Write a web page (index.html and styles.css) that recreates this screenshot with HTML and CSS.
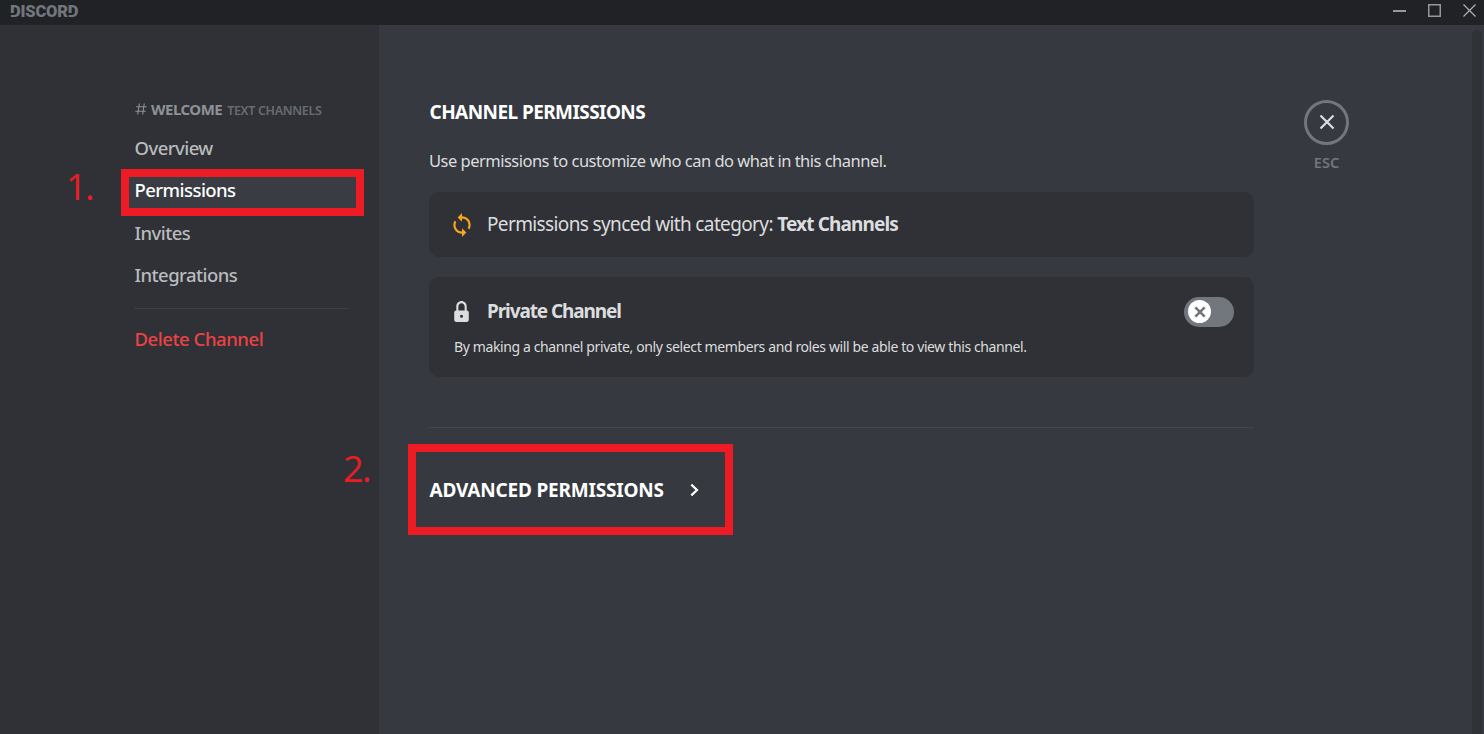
FILE: index.html
```html
<!DOCTYPE html>
<html lang="en">
<head>
<meta charset="utf-8">
<title>Channel Permissions</title>
<link rel="stylesheet" href="styles.css">
</head>
<body>
<div class="app">
  <header class="titlebar">
    <div class="wordmark"><span class="letter-d">D</span>ISCOR<span class="letter-d">D</span></div>
    <div class="window-controls">
      <svg width="13" height="13" viewBox="0 0 13 13"><path d="M0 7h13" stroke="#96989d" stroke-width="2"/></svg>
      <svg width="13" height="13" viewBox="0 0 13 13"><path d="M.75.75h11.500v11.500H.75z" fill="none" stroke="#96989d" stroke-width="1.500"/></svg>
      <svg width="13" height="13" viewBox="0 0 13 13"><path d="M.5.5l12 12M12.500.5l-12 12" fill="none" stroke="#b0b2b6" stroke-width="1.200"/></svg>
    </div>
  </header>
  <div class="body">
    <nav class="sidebar">
      <div class="nav-heading">
        <svg width="12" height="12" viewBox="0 0 12 12"><path d="M4.400.5L2.700 11.500M9.300.5L7.600 11.500M1.200 3.700h10.500M.3 8.300h10.500" fill="none" stroke="#8e9297" stroke-width="1.100"/></svg>
        <span class="nav-channel">WELCOME</span>
        <span class="nav-category">TEXT CHANNELS</span>
      </div>
      <a class="nav-item">Overview</a>
      <a class="nav-item active">Permissions</a>
      <a class="nav-item">Invites</a>
      <a class="nav-item">Integrations</a>
      <div class="nav-divider"></div>
      <a class="nav-item danger">Delete Channel</a>
    </nav>
    <main class="content">
      <h1 class="title">CHANNEL PERMISSIONS</h1>
      <p class="intro">Use permissions to customize who can do what in this channel.</p>
      <section class="card sync">
        <svg class="card-icon" width="26" height="26" viewBox="0 0 24 24"><path fill="#faa61a" d="M12 4V1L8 5l4 4V6c3.310 0 6 2.690 6 6 0 1.010-.25 1.970-.7 2.800l1.460 1.460A7.930 7.930 0 0 0 20 12c0-4.420-3.580-8-8-8zm0 14c-3.310 0-6-2.690-6-6 0-1.010.25-1.970.7-2.800L5.240 7.740A7.930 7.930 0 0 0 4 12c0 4.420 3.580 8 8 8v3l4-4-4-4v3z"/></svg>
        <p class="sync-text">Permissions synced with category: <b>Text Channels</b></p>
      </section>
      <section class="card private">
        <div class="private-row">
          <svg class="card-icon" width="25" height="25" viewBox="0 0 24 24"><path fill="#dcddde" d="M17 11V7c0-2.760-2.240-5-5-5S7 4.240 7 7v4c-1.100 0-2 .9-2 2v7c0 1.100.9 2 2 2h10c1.100 0 2-.9 2-2v-7c0-1.100-.9-2-2-2zm-5 7a1.500 1.500 0 1 1 0-3 1.500 1.500 0 0 1 0 3zm3-7H9V7c0-1.650 1.350-3 3-3s3 1.350 3 3v4z"/></svg>
          <h2 class="private-title">Private Channel</h2>
          <div class="toggle"><div class="knob"><svg width="12" height="12" viewBox="0 0 12 12"><path d="M1.300 1.300l9.400 9.400M10.700 1.300l-9.400 9.400" stroke="#72767d" stroke-width="2.600"/></svg></div></div>
        </div>
        <p class="private-note">By making a channel private, only select members and roles will be able to view this channel.</p>
      </section>
      <div class="divider"></div>
      <div class="advanced"><span>ADVANCED PERMISSIONS</span>
        <svg width="9" height="14" viewBox="0 0 9 14"><path d="M1.300 1.600L7 7l-5.700 5.400" fill="none" stroke="#fff" stroke-width="2.200"/></svg>
      </div>
    </main>
    <aside class="close-column">
      <div class="close"><svg width="16" height="16" viewBox="0 0 16 16"><path d="M1.500 1.500l13 13M14.500 1.500l-13 13" stroke="#dcddde" stroke-width="2.200"/></svg></div>
      <span class="esc">ESC</span>
    </aside>
    <div class="scrollbar"></div>
  </div>
  <div class="mark mark-one"></div>
  <div class="mark mark-two"></div>
  <span class="step step-one">1.</span>
  <span class="step step-two">2.</span>
</div>
</body>
</html>
```
FILE: styles.css
```css
* { box-sizing: border-box; }
body, h1, h2, p { margin: 0; }
body { font-family: "Noto Sans", "Open Sans", sans-serif; color: #dcddde; overflow: hidden; }
svg { display: block; flex: none; }
.app { position: relative; display: flex; flex-direction: column; width: 1484px; height: 734px; background: #363940; white-space: nowrap; }

.titlebar { flex: none; display: flex; justify-content: space-between; height: 25px; padding: 0 8px 0 10px; background: #202225; }
.wordmark { font: 900 16.500px/24px Roboto, "Noto Sans", sans-serif; color: #72767d; letter-spacing: -.2px; }
.letter-d { position: relative; }
.letter-d::after { content: ""; position: absolute; left: 0; top: 11px; width: 5px; height: 2px; background: #202225; }
.window-controls { display: flex; gap: 22px; padding-top: 4px; }

.body { flex: 1; display: flex; min-height: 0; }
.sidebar { width: 379px; padding: 71px 23px 0 121px; background: #2f3136; display: flex; flex-direction: column; }
.nav-heading { display: flex; align-items: center; height: 26px; padding-left: 14px; margin-bottom: 6px; }
.nav-channel { margin-left: 4px; font-size: 15px; font-weight: 700; color: #8e9297; letter-spacing: -.5px; }
.nav-category { margin: 2px 0 0 5px; font-size: 12.500px; font-weight: 600; color: #686c72; letter-spacing: -.35px; }
.nav-item { height: 40px; line-height: 40px; margin-bottom: 2.400px; padding-left: 13.500px; font-size: 18.500px; font-weight: 500; color: #b9bbbe; letter-spacing: -.55px; }
.nav-item.active { color: #fff; background: #393c43; }
.nav-divider { height: 1px; margin: 10px 7px 10px 13px; background: #3b3e44; }
.nav-item.danger { color: #ed4245; letter-spacing: -.45px; }

.content { width: 925px; padding: 75px 50px 0; }
.title { padding-left: .5px; font-size: 19px; line-height: 24px; font-weight: 700; color: #fff; letter-spacing: -.57px; }
.intro { margin-top: 25px; font-size: 16.500px; line-height: 24px; letter-spacing: -.51px; }
.card { background: #2f3136; border-radius: 10px; }
.sync { display: flex; align-items: center; height: 65px; margin-top: 19px; padding-left: 19.500px; }
.sync-text { margin: 0 0 1px 12.500px; font-size: 19px; letter-spacing: -.63px; }
.sync-text b { font-weight: 700; letter-spacing: -.85px; }
.private { height: 100px; margin-top: 20px; padding: 20px 20px 0; }
.private-row { display: flex; align-items: center; height: 30px; }
.private-row .card-icon { margin-bottom: 1px; }
.private-title { flex: 1; margin: 0 0 3px 13px; font-size: 19px; font-weight: 700; letter-spacing: -1.100px; }
.private-note { margin: 9px 0 0 5px; font-size: 14px; line-height: 22px; letter-spacing: -.385px; }
.toggle { width: 50px; height: 30px; padding: 3px 4px; border-radius: 15px; background: #72767d; }
.knob { display: flex; align-items: center; justify-content: center; width: 23px; height: 23px; border-radius: 50%; background: #fff; }
.divider { height: 1px; margin-top: 50px; background: #42454a; }
.advanced { display: flex; align-items: center; justify-content: space-between; width: 270px; height: 24px; margin-top: 50px; padding-left: .5px; font-size: 19px; font-weight: 700; color: #fff; letter-spacing: -.2px; }

.close-column { width: 45px; margin-top: 75px; display: flex; flex-direction: column; align-items: center; }
.close { display: flex; align-items: center; justify-content: center; width: 45px; height: 45px; padding-bottom: 1px; border: 3px solid #72767d; border-radius: 50%; }
.esc { margin-top: 7px; font-size: 14.500px; line-height: 20px; font-weight: 600; color: #72767d; }
.scrollbar { width: 10px; margin: 5px 2px 0 auto; border-radius: 5px 5px 0 0; background: #2f3336; }

.mark { position: absolute; border: 8px solid #ed1c24; }
.mark-one { left: 121px; top: 169px; width: 243px; height: 47px; }
.mark-two { left: 408px; top: 444px; width: 325px; height: 91px; }
.step { position: absolute; font-family: "Open Sans", "Noto Sans", sans-serif; font-size: 36px; line-height: 40px; font-weight: 400; color: #ed1c24; letter-spacing: -1.500px; }
.step-one { left: 66px; top: 167px; }
.step-two { left: 343px; top: 449px; }
```
